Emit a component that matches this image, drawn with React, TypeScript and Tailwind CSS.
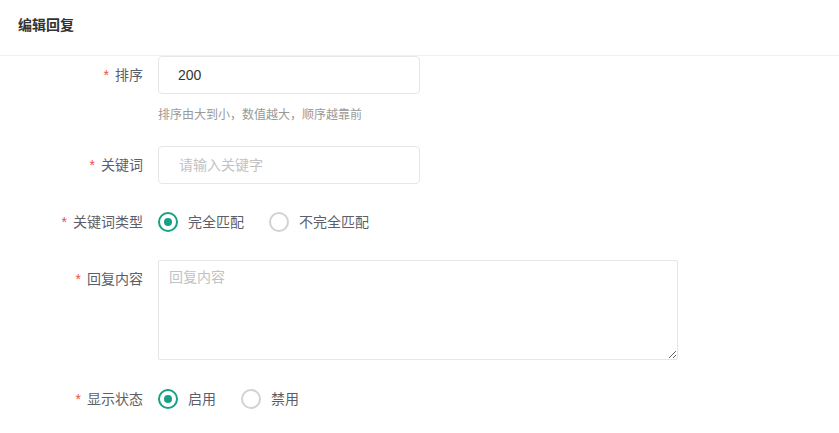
const FONT = "font-['Liberation_Sans','Noto_Sans_CJK_SC',sans-serif]";

const Label = ({ text, top = false }: { text: string; top?: boolean }) => (
  <div
    className={`w-[143px] shrink-0 text-right text-[14px] leading-5 text-[#5c5f69] ${top ? "pt-[9px]" : "flex h-[38px] items-center justify-end"}`}
  >
    <span className="mr-[6px] text-[#f04b4b]">*</span>
    {text}
  </div>
);

const Radio = ({ label, checked }: { label: string; checked?: boolean }) => (
  <label className="mr-[25px] flex items-center">
    <span
      className={`flex h-[20px] w-[20px] items-center justify-center rounded-full border-2 ${checked ? "border-[#16a085]" : "border-[#d2d2d2]"}`}
    >
      {checked && <span className="h-[8px] w-[8px] rounded-full bg-[#16a085]" />}
    </span>
    <span className="ml-[10px] text-[14px] text-[#5c5f69]">{label}</span>
  </label>
);

export default function App() {
  return (
    <div className={`min-h-screen bg-white ${FONT}`}>
      <div className="flex h-[56px] items-center border-b border-[#f0f0f0] px-[18px] pb-[5px]">
        <h2 className="text-[14px] font-bold text-[#333]">编辑回复</h2>
      </div>

      <div className="flex">
        <Label text="排序" />
        <div className="ml-[15px]">
          <input
            defaultValue="200"
            className="h-[38px] w-[262px] rounded-[4px] border border-[#e6e6e6] px-[19px] text-[14px] text-[#333] outline-none"
          />
          <p className="mt-[12px] text-[12px] leading-[18px] text-[#999]">
            排序由大到小，数值越大，顺序越靠前
          </p>
        </div>
      </div>

      <div className="mt-[22px] flex">
        <Label text="关键词" />
        <input
          placeholder="请输入关键字"
          className="ml-[15px] h-[38px] w-[262px] rounded-[4px] border border-[#e6e6e6] px-[20px] text-[14px] outline-none placeholder:text-[#c2c2c2]"
        />
      </div>

      <div className="mt-[19px] flex">
        <Label text="关键词类型" />
        <div className="ml-[15px] flex h-[38px] items-center">
          <Radio label="完全匹配" checked />
          <Radio label="不完全匹配" />
        </div>
      </div>

      <div className="mt-[19px] flex">
        <Label text="回复内容" top />
        <textarea
          placeholder="回复内容"
          className="ml-[15px] block h-[100px] w-[520px] rounded-[2px] border border-[#e6e6e6] px-[10px] py-[6px] text-[14px] leading-5 outline-none placeholder:text-[#c2c2c2]"
        />
      </div>

      <div className="mt-[20px] flex">
        <Label text="显示状态" />
        <div className="ml-[15px] flex h-[38px] items-center">
          <Radio label="启用" checked />
          <Radio label="禁用" />
        </div>
      </div>
    </div>
  );
}
